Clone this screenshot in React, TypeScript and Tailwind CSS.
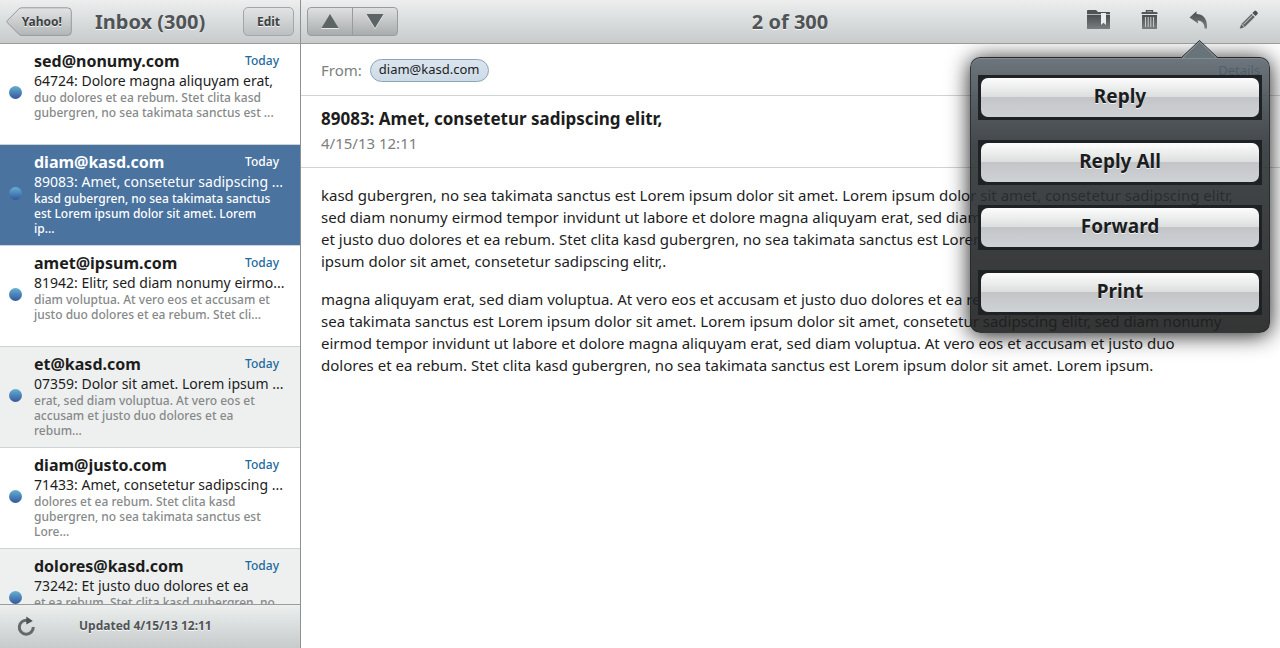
import React from 'react';

type Mail = {
  from: string;
  subject: string;
  preview: string;
  selected?: boolean;
};

const mails: Mail[] = [
  {
    from: 'sed@nonumy.com',
    subject: '64724: Dolore magna aliquyam erat,',
    preview: 'duo dolores et ea rebum. Stet clita kasd\ngubergren, no sea takimata sanctus est ...',
  },
  {
    from: 'diam@kasd.com',
    subject: '89083: Amet, consetetur sadipscing ...',
    preview: 'kasd gubergren, no sea takimata sanctus\nest Lorem ipsum dolor sit amet. Lorem\nip...',
    selected: true,
  },
  {
    from: 'amet@ipsum.com',
    subject: '81942: Elitr, sed diam nonumy eirmo...',
    preview: 'diam voluptua. At vero eos et accusam et\njusto duo dolores et ea rebum. Stet cli...',
  },
  {
    from: 'et@kasd.com',
    subject: '07359: Dolor sit amet. Lorem ipsum ...',
    preview: 'erat, sed diam voluptua. At vero eos et\naccusam et justo duo dolores et ea\nrebum...',
  },
  {
    from: 'diam@justo.com',
    subject: '71433: Amet, consetetur sadipscing ...',
    preview: 'dolores et ea rebum. Stet clita kasd\ngubergren, no sea takimata sanctus est\nLore...',
  },
  {
    from: 'dolores@kasd.com',
    subject: '73242: Et justo duo dolores et ea',
    preview: 'et ea rebum. Stet clita kasd gubergren, no',
  },
];

const paragraphs = [
  `kasd gubergren, no sea takimata sanctus est Lorem ipsum dolor sit amet. Lorem ipsum dolor sit amet, consetetur sadipscing elitr,
sed diam nonumy eirmod tempor invidunt ut labore et dolore magna aliquyam erat, sed diam voluptua. At vero eos et accusam
et justo duo dolores et ea rebum. Stet clita kasd gubergren, no sea takimata sanctus est Lorem ipsum dolor sit amet. Lorem
ipsum dolor sit amet, consetetur sadipscing elitr,.`,
  `magna aliquyam erat, sed diam voluptua. At vero eos et accusam et justo duo dolores et ea rebum. Stet clita kasd gubergren, no
sea takimata sanctus est Lorem ipsum dolor sit amet. Lorem ipsum dolor sit amet, consetetur sadipscing elitr, sed diam nonumy
eirmod tempor invidunt ut labore et dolore magna aliquyam erat, sed diam voluptua. At vero eos et accusam et justo duo
dolores et ea rebum. Stet clita kasd gubergren, no sea takimata sanctus est Lorem ipsum dolor sit amet. Lorem ipsum.`,
];

const barClass = 'border-[#999c9d] bg-linear-to-b from-[#ecefee] to-[#c7cbcc]';
const embossed = '[text-shadow:0_1px_0_rgba(255,255,255,0.8)]';

function IconDefs() {
  return (
    <svg width="0" height="0" className="absolute" aria-hidden="true">
      <defs>
        <linearGradient id="ink" x1="0" y1="0" x2="0" y2="1">
          <stop offset="0" stopColor="#4b4e50" />
          <stop offset="1" stopColor="#7b7e80" />
        </linearGradient>
      </defs>
    </svg>
  );
}

function FolderIcon() {
  return (
    <svg width="24" height="20" viewBox="0 0 24 20" aria-hidden="true">
      <path d="M0 1Q0 0 1 0H9L11 2H22.5Q23 2 23 2.6V4H0Z" fill="#505355" />
      <path d="M0 4.5H23" stroke="#b4b7b8" />
      <path d="M0 5H23V19H0Z" fill="url(#ink)" />
      <path d="M14 3H19V15L16.5 12.8L14 15Z" fill="#eceeee" />
    </svg>
  );
}

function TrashIcon() {
  return (
    <svg width="18" height="20" viewBox="0 0 18 20" aria-hidden="true">
      <path d="M5.5 2.5V0.7H11.5V2.5" fill="none" stroke="#505355" strokeWidth="1.4" />
      <path d="M0.5 4V3Q0.5 2 1.5 2H15.5Q16.5 2 16.5 3V4Z" fill="#55585a" />
      <path d="M1 5H16V19H1Z" fill="url(#ink)" />
      <path d="M4.5 7V17M7.2 7V17M9.8 7V17M12.5 7V17" stroke="#c3c6c7" strokeWidth="1.1" />
    </svg>
  );
}

function ReplyIcon() {
  return (
    <svg width="20" height="20" viewBox="0 0 20 20" aria-hidden="true">
      <path
        d="M0.5 7.5L7.5 1.2V4C13.5 4 18.6 8 18 18.6H15.6C15.6 13.4 12.6 10.6 8.6 10.6L9.2 13.4Z"
        fill="url(#ink)"
      />
    </svg>
  );
}

function PencilIcon() {
  return (
    <svg width="20" height="20" viewBox="0 0 20 20" aria-hidden="true">
      <path d="M0.7 18.8L2.2 14.3L5.2 17.3Z" fill="#5a5d5f" />
      <path d="M2.6 13.7L12.6 3.7L15.8 6.9L5.8 16.9Z" fill="#66696b" />
      <path d="M4.4 14.4L13.6 5.2" stroke="#c9cccd" strokeWidth="1" />
      <path d="M13.4 2.9L15.5 0.9Q16.4 0.2 17.4 1.2L18.4 2.2Q19.3 3.2 18.5 4.1L16.6 6.1Z" fill="#4b4e50" />
    </svg>
  );
}

function RefreshIcon() {
  return (
    <svg width="20" height="20" viewBox="0 0 20 20" aria-hidden="true">
      <path d="M10.5 4.3A7 7 0 1 0 16.3 11" fill="none" stroke="#66696b" strokeWidth="3" />
      <path d="M9.3 0.4L15.8 4.9L9.3 8.6Z" fill="#505355" />
    </svg>
  );
}

function MailItem({ mail, striped }: { mail: Mail; striped: boolean }) {
  const sel = mail.selected;
  const bg = sel ? 'bg-[#4a739f]' : striped ? 'bg-[#eef0f0]' : 'bg-white';
  return (
    <li className={`flex h-[101px] shrink-0 border-b border-[#d0d3d4] ${bg}`}>
      <div className="flex w-[34px] shrink-0 items-center pb-[4px] pl-[9px]">
        <span className="size-[13px] rounded-full bg-linear-to-b from-[#67b0d2] to-[#34589c]" />
      </div>
      <a href="#mail" className="block min-w-0 grow pt-[7px]">
        <div className="flex items-center justify-between pr-[21px] leading-[20px]">
          <span className={`text-[16px] font-bold ${sel ? 'text-white' : 'text-[#1d1d1d]'}`}>{mail.from}</span>
          <span className={`text-[12px] font-medium ${sel ? 'text-white' : 'text-[#226a9d]'}`}>Today</span>
        </div>
        <div className={`text-[14px] leading-[19px] whitespace-pre ${sel ? 'text-white' : 'text-[#1d1d1d]'}`}>
          {mail.subject}
        </div>
        <div className={`text-[12px] leading-[15px] font-medium whitespace-pre ${sel ? 'text-white' : 'text-[#868989]'}`}>
          {mail.preview}
        </div>
      </a>
    </li>
  );
}

function Sidebar() {
  return (
    <aside className="flex w-[301px] shrink-0 flex-col border-r border-[#8e9192] bg-white">
      <header className={`flex h-11 shrink-0 items-center border-b px-[6px] ${barClass}`}>
        <button className="relative flex h-[30px] w-[66px] items-center justify-end pr-[10px]">
          <svg className="absolute inset-0" width="66" height="30" viewBox="0 0 66 30" aria-hidden="true">
            <defs>
              <linearGradient id="back" x1="0" y1="0" x2="0" y2="1">
                <stop offset="0" stopColor="#e2e4e4" />
                <stop offset="1" stopColor="#b3b6b8" />
              </linearGradient>
            </defs>
            <path
              d="M13 1.8Q14 0.8 16 0.8H61.5Q65.3 0.8 65.3 4.6V24.6Q65.3 28.4 61.5 28.4H16Q14 28.4 13 27.4L1.2 15.5Q0.4 14.6 1.2 13.7Z"
              fill="url(#back)"
              stroke="#96999b"
            />
          </svg>
          <span className={`relative text-[12px] leading-[16px] font-bold text-[#3f4244] ${embossed}`}>Yahoo!</span>
        </button>
        <h1 className={`ml-[23px] text-[20px] leading-[24px] font-bold text-[#505456] ${embossed}`}>Inbox (300)</h1>
        <button
          className={`ml-auto h-[29px] w-[51px] rounded-[5px] border border-[#a3a6a8] bg-linear-to-b from-[#e2e4e4] to-[#bcbfc1] text-[12px] font-bold text-[#3f4244] ${embossed}`}
        >
          Edit
        </button>
      </header>
      <ul className="flex min-h-0 grow flex-col overflow-hidden">
        {mails.map((m, i) => (
          <MailItem key={m.from} mail={m} striped={i % 2 === 1} />
        ))}
      </ul>
      <footer className={`flex h-11 shrink-0 items-center border-t pb-[2px] pl-[17px] ${barClass}`}>
        <button aria-label="Refresh">
          <RefreshIcon />
        </button>
        <span className={`ml-[42px] text-[12px] font-bold text-[#505456] ${embossed}`}>Updated 4/15/13 12:11</span>
      </footer>
    </aside>
  );
}

function ActionMenu() {
  return (
    <div className="absolute top-[57px] right-[10px] z-10 flex w-[300px] flex-col gap-[20px] rounded-[10px] border border-[#23282b]/80 bg-linear-to-b from-[#5d676e]/90 via-[#2e3438]/90 via-32% to-[#1e1f1f]/90 px-[7px] py-[17px] shadow-[inset_0_1px_0_rgba(255,255,255,0.15),0_2px_22px_rgba(0,0,0,0.9)]">
      {['Reply', 'Reply All', 'Forward', 'Print'].map((label) => (
        <div key={label} className="flex h-[45px] bg-[#1f2225] p-[3px]">
          <button className="grow rounded-[7px] pb-[3px] text-[19px] leading-[24px] font-bold text-[#1b1d1e] [background-image:linear-gradient(#fdfdfd,#dcdede_49%,#c3c5c8_50%,#cfd2d4)] [text-shadow:0_1px_0_rgba(255,255,255,0.8)]">
            {label}
          </button>
        </div>
      ))}
    </div>
  );
}

function Detail() {
  return (
    <main className="relative flex min-w-0 grow flex-col bg-white">
      <header className={`relative z-20 flex h-11 shrink-0 items-center justify-between border-b pr-[21px] pl-[6px] ${barClass}`}>
        <div className="flex h-[29px] w-[91px] divide-x divide-[#999c9e] rounded-[4px] border border-[#999c9e] bg-linear-to-b from-[#dfe1e1] to-[#a9acad]">
          <button aria-label="Previous message" className="flex grow items-center justify-center">
            <svg width="18" height="15" viewBox="0 0 18 15" aria-hidden="true">
              <path d="M9 0L17.5 14H0.5Z" fill="#5d6466" />
              <path d="M0.5 14.5H17.5" stroke="#e6e8e8" />
            </svg>
          </button>
          <button aria-label="Next message" className="flex grow items-center justify-center">
            <svg width="18" height="15" viewBox="0 0 18 15" aria-hidden="true">
              <path d="M0.5 0.5L9 14.5L17.5 0.5" fill="none" stroke="#e6e8e8" />
              <path d="M0.5 0H17.5L9 14Z" fill="#5d6466" />
            </svg>
          </button>
        </div>
        <h2 className={`ml-[95px] text-[20px] leading-[24px] font-bold text-[#505456] ${embossed}`}>2 of 300</h2>
        <div className="flex items-center gap-[30px] pb-[3px]">
          <button aria-label="Move to folder"><FolderIcon /></button>
          <button aria-label="Delete"><TrashIcon /></button>
          <button aria-label="Reply options"><ReplyIcon /></button>
          <button aria-label="Compose"><PencilIcon /></button>
        </div>
      </header>

      <section className="flex h-[52px] shrink-0 items-center border-b border-[#d0d3d4] px-[20px] pt-[2px]">
        <span className="text-[15px] text-[#7c8080]">From:</span>
        <a
          href="#sender"
          className="ml-[8px] flex h-[23px] items-center rounded-full border border-[#8ba3bb] bg-linear-to-b from-[#dbe5ee] to-[#cddbe7] px-[8px] pb-[2px] text-[13px] text-[#1d1d1d]"
        >
          diam@kasd.com
        </a>
        <a href="#details" className="ml-auto text-[13px] text-[#0c5a94]">
          Details
        </a>
      </section>
      <section className="flex h-[72px] shrink-0 flex-col border-b border-[#d0d3d4] px-[20px] pt-[11px]">
        <h3 className="text-[17px] leading-[24px] font-bold text-[#1d1d1d]">89083: Amet, consetetur sadipscing elitr,</h3>
        <time className="text-[15px] leading-[25px] text-[#7c8080]">4/15/13 12:11</time>
      </section>
      <article className="flex flex-col gap-[16px] px-[20px] pt-[16px] text-[15px] leading-[22px] text-[#1d1d1d]">
        {paragraphs.map((p) => (
          <p key={p} className="whitespace-pre-line">
            {p}
          </p>
        ))}
      </article>

      <ActionMenu />
      <svg className="absolute top-[40px] right-[62px] z-30" width="37" height="18" viewBox="0 0 37 18" aria-hidden="true">
        <path d="M0.5 18L18.5 0.5L36.5 18Z" fill="#69737a" />
        <path d="M1.5 18L18.5 1.8L35.5 18" fill="none" stroke="#8d979e" />
        <path d="M0.5 17.5L18.5 0.5L36.5 17.5" fill="none" stroke="#2b3236" />
      </svg>
    </main>
  );
}

export default function App() {
  return (
    <div className="flex h-screen overflow-hidden bg-white font-['Noto_Sans','Open_Sans',sans-serif]">
      <IconDefs />
      <Sidebar />
      <Detail />
    </div>
  );
}
